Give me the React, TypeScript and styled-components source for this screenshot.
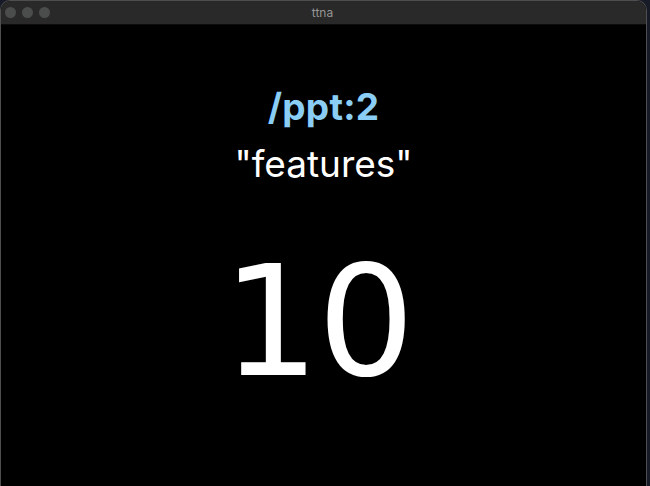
import React from "react";
import styled, { createGlobalStyle } from "styled-components";

const Global = createGlobalStyle`
  html, body { margin: 0; padding: 0; background: #171b27; }
  body { width: 650px; height: 486px; overflow: hidden; }
  #root { width: 650px; height: 486px; }
`;

const Window = styled.div`
  box-sizing: border-box;
  width: 647px;
  height: 486px;
  border: 1px solid #4d4e50;
  border-bottom: none;
  border-radius: 10px 10px 0 0;
  overflow: hidden;
  background: #000;
  display: flex;
  flex-direction: column;
`;

const TitleBar = styled.div`
  position: relative;
  height: 23px;
  flex: none;
  background: #282928;
  border-bottom: 1px solid #0c0c0c;
  display: flex;
  align-items: center;
  justify-content: center;
`;

const Lights = styled.div`
  position: absolute;
  left: 4px;
  top: 6px;
  display: flex;
  gap: 6px;
`;

const Light = styled.span`
  width: 11px;
  height: 11px;
  border-radius: 50%;
  background: #4b4c4c;
`;

const Title = styled.span`
  font-family: Inter, "Liberation Sans", sans-serif;
  font-size: 12px;
  color: #959595;
  margin-left: -2px;
`;

const Content = styled.main`
  flex: 1;
  display: flex;
  flex-direction: column;
  align-items: center;
  padding-top: 60px;
`;

const Command = styled.div`
  font-family: Inter, "Liberation Sans", sans-serif;
  font-weight: 700;
  font-size: 37px;
  line-height: 44px;
  color: #8acdf5;
  letter-spacing: 0.2px;
`;

const Label = styled.div`
  font-family: Inter, "Liberation Sans", sans-serif;
  font-weight: 400;
  font-size: 37px;
  line-height: 44px;
  color: #ffffff;
  margin-top: 13px;
`;

const Count = styled.div`
  font-family: "DejaVu Sans", sans-serif;
  font-weight: 400;
  font-size: 153px;
  line-height: 160px;
  color: #ffffff;
  letter-spacing: -2px;
  margin-top: 56px;
  margin-right: 12px;
`;

export default function App() {
  return (
    <>
      <Global />
      <Window>
        <TitleBar>
          <Lights>
            <Light />
            <Light />
            <Light />
          </Lights>
          <Title>ttna</Title>
        </TitleBar>
        <Content>
          <Command>/ppt:2</Command>
          <Label>"features"</Label>
          <Count>10</Count>
        </Content>
      </Window>
    </>
  );
}
